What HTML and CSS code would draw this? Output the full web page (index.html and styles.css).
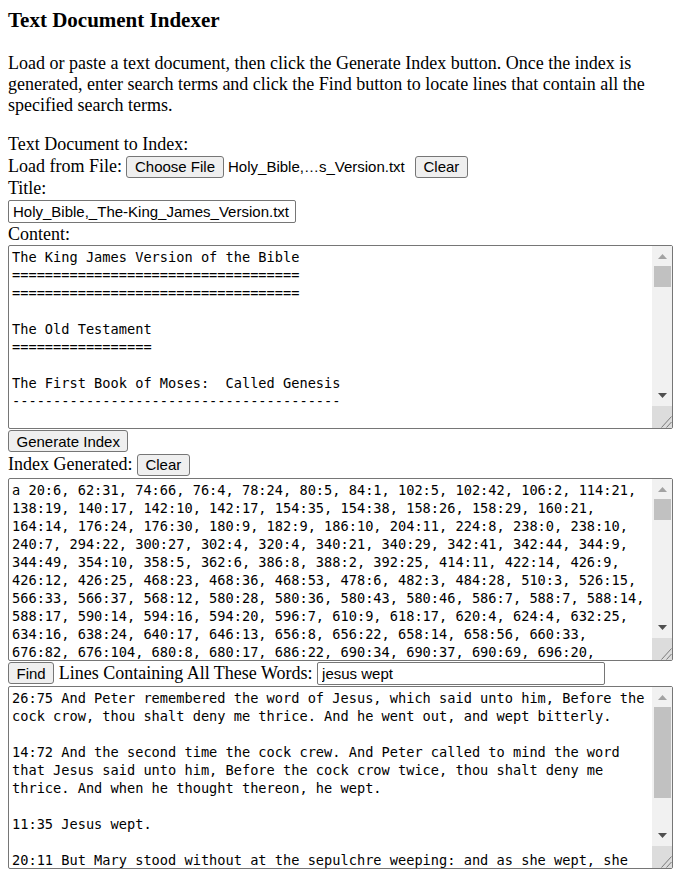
FILE: index.html
```html
<!DOCTYPE html>
<html lang="en">
<head>
<meta charset="utf-8">
<title>Text Document Indexer</title>
<link rel="stylesheet" href="styles.css">
</head>
<body>
<h1 class="page-title">Text Document Indexer</h1>
<p class="intro">Load or paste a text document, then click the Generate Index button. Once the index is generated, enter search terms and click the Find button to locate lines that contain all the specified search terms.</p>
<div class="label-line">Text Document to Index:</div>
<div class="row">
  <span>Load from File:</span>
  <span class="file-picker"><button class="btn" type="button">Choose File</button><span class="file-name">Holy_Bible,…s_Version.txt</span></span>
  <button class="btn" type="button">Clear</button>
</div>
<div class="label-line">Title:</div>
<input class="text-input title-input" type="text" value="Holy_Bible,_The-King_James_Version.txt">
<div class="label-line content-label">Content:</div>
<div class="area-wrap content-wrap">
<textarea class="area" spellcheck="false">The King James Version of the Bible
===================================
===================================

The Old Testament
=================

The First Book of Moses:  Called Genesis
----------------------------------------

1:1 In the beginning God created the heaven and the earth.

1:2 And the earth was without form, and void; and darkness was upon
the face of the deep. And the Spirit of God moved upon the face of the
waters.

1:3 And God said, Let there be light: and there was light.

1:4 And God saw the light, that it was good: and God divided the light
from the darkness.

1:5 And God called the light Day, and the darkness he called Night.
And the evening and the morning were the first day.</textarea>
<div class="sb" aria-hidden="true">
  <div class="sb-btn"><svg width="9" height="5" viewBox="0 0 9 5"><path d="M0 5L4.5 0L9 5Z" fill="#a3a3a3"/></svg></div>
  <div class="sb-track"><div class="sb-thumb"></div></div>
  <div class="sb-btn sb-btn-down"><svg width="9" height="5" viewBox="0 0 9 5"><path d="M0 0L9 0L4.5 5Z" fill="#505050"/></svg></div>
  <div class="sb-corner"><svg width="20" height="22" viewBox="0 0 20 22"><path d="M9.5 21.5L19.5 10.5M14.5 21.5L19.5 16" stroke="#7a7a7a" stroke-width="1" fill="none"/></svg></div>
</div>
</div>
<button class="btn block-btn" type="button">Generate Index</button>
<div class="row index-row">
  <span>Index Generated:</span>
  <button class="btn" type="button">Clear</button>
</div>
<div class="area-wrap index-wrap">
<textarea class="area" spellcheck="false">a 20:6, 62:31, 74:66, 76:4, 78:24, 80:5, 84:1, 102:5, 102:42, 106:2, 114:21,
138:19, 140:17, 142:10, 142:17, 154:35, 154:38, 158:26, 158:29, 160:21,
164:14, 176:24, 176:30, 180:9, 182:9, 186:10, 204:11, 224:8, 238:0, 238:10,
240:7, 294:22, 300:27, 302:4, 320:4, 340:21, 340:29, 342:41, 342:44, 344:9,
344:49, 354:10, 358:5, 362:6, 386:8, 388:2, 392:25, 414:11, 422:14, 426:9,
426:12, 426:25, 468:23, 468:36, 468:53, 478:6, 482:3, 484:28, 510:3, 526:15,
566:33, 566:37, 568:12, 580:28, 580:36, 580:43, 580:46, 586:7, 588:7, 588:14,
588:17, 590:14, 594:16, 594:20, 596:7, 610:9, 618:17, 620:4, 624:4, 632:25,
634:16, 638:24, 640:17, 646:13, 656:8, 656:22, 658:14, 658:56, 660:33,
676:82, 676:104, 680:8, 680:17, 686:22, 690:34, 690:37, 690:69, 696:20,
698:8, 702:15, 704:3, 706:27, 710:12, 712:40, 716:9, 720:31, 722:6, 726:18,
728:2, 730:44, 734:13, 736:7, 740:21, 742:35, 746:4, 748:19, 752:8, 754:26,
758:11, 760:3, 764:29, 766:14, 770:6, 772:38, 776:10, 778:22, 782:5, 784:17</textarea>
<div class="sb" aria-hidden="true">
  <div class="sb-btn"><svg width="9" height="5" viewBox="0 0 9 5"><path d="M0 5L4.5 0L9 5Z" fill="#a3a3a3"/></svg></div>
  <div class="sb-track"><div class="sb-thumb"></div></div>
  <div class="sb-btn sb-btn-down"><svg width="9" height="5" viewBox="0 0 9 5"><path d="M0 0L9 0L4.5 5Z" fill="#505050"/></svg></div>
  <div class="sb-corner"><svg width="20" height="22" viewBox="0 0 20 22"><path d="M9.5 21.5L19.5 10.5M14.5 21.5L19.5 16" stroke="#7a7a7a" stroke-width="1" fill="none"/></svg></div>
</div>
</div>
<div class="row find-row">
  <button class="btn" type="button">Find</button>
  <span>Lines Containing All These Words:</span>
  <input class="text-input" type="text" value="jesus wept">
</div>
<div class="area-wrap results-wrap">
<textarea class="area" spellcheck="false">26:75 And Peter remembered the word of Jesus, which said unto him, Before the
cock crow, thou shalt deny me thrice. And he went out, and wept bitterly.

14:72 And the second time the cock crew. And Peter called to mind the word
that Jesus said unto him, Before the cock crow twice, thou shalt deny me
thrice. And when he thought thereon, he wept.

11:35 Jesus wept.

20:11 But Mary stood without at the sepulchre weeping: and as she wept, she
stooped down, and looked into the sepulchre,</textarea>
<div class="sb" aria-hidden="true">
  <div class="sb-btn"><svg width="9" height="5" viewBox="0 0 9 5"><path d="M0 5L4.5 0L9 5Z" fill="#a3a3a3"/></svg></div>
  <div class="sb-track"><div class="sb-thumb sb-thumb-large"></div></div>
  <div class="sb-btn sb-btn-down"><svg width="9" height="5" viewBox="0 0 9 5"><path d="M0 0L9 0L4.5 5Z" fill="#505050"/></svg></div>
  <div class="sb-corner"><svg width="20" height="22" viewBox="0 0 20 22"><path d="M9.5 21.5L19.5 10.5M14.5 21.5L19.5 16" stroke="#7a7a7a" stroke-width="1" fill="none"/></svg></div>
</div>
</div>
</body>
</html>
```

FILE: styles.css
```css
html {
  background: #ffffff;
}

body {
  margin: 8px;
  font-family: "Liberation Serif", "Times New Roman", serif;
  font-size: 18px;
  line-height: 21px;
  color: #000000;
}

.page-title {
  margin: 0 0 21px;
  font-size: 21px;
  line-height: 24px;
  font-weight: bold;
}

.intro {
  margin: 0 0 18px;
}

.label-line {
  height: 21px;
}

.content-label {
  margin-top: 1px;
}

.row {
  display: flex;
  align-items: center;
  gap: 4.5px;
  height: 23px;
  white-space: nowrap;
}

.index-row {
  height: 25px;
}

.find-row {
  height: 24px;
}

.btn {
  box-sizing: border-box;
  height: 22px;
  margin: 0;
  padding: 1px 7.5px;
  font-family: "Liberation Sans", Arial, sans-serif;
  font-size: 15px;
  line-height: 17px;
  color: #000000;
  background: #efefef;
  border: 1px solid #767676;
  border-radius: 3px;
}

.block-btn {
  display: block;
  margin-top: 1px;
}

.file-picker {
  display: flex;
  align-items: center;
  width: 284px;
}

.file-name {
  margin-left: 4.5px;
  font-family: "Liberation Sans", Arial, sans-serif;
  font-size: 15px;
  line-height: 17px;
}

.text-input {
  box-sizing: border-box;
  width: 288px;
  height: 23px;
  margin: 0;
  padding: 1px 4px;
  font-family: "Liberation Sans", Arial, sans-serif;
  font-size: 15px;
  color: #000000;
  background: #ffffff;
  border: 1px solid #767676;
  border-radius: 2px;
}

.title-input {
  display: block;
  margin-top: 1px;
}

/* textarea with a drawn scrollbar on top of it */
.area-wrap {
  position: relative;
  width: 665px;
  height: 183px;
}

.content-wrap {
  height: 184px;
}

.index-wrap,
.results-wrap {
  margin-top: 1px;
}

.area {
  display: block;
  box-sizing: border-box;
  width: 100%;
  height: 100%;
  margin: 0;
  padding: 2px 23px 2px 3px;
  font-family: "DejaVu Sans Mono", "Liberation Mono", monospace;
  font-size: 13.65px;
  line-height: 18px;
  color: #000000;
  background: #ffffff;
  border: 1px solid #767676;
  border-radius: 2px;
  overflow: hidden;
  resize: none;
}

.sb {
  position: absolute;
  top: 1px;
  right: 1px;
  bottom: 1px;
  width: 20px;
  display: flex;
  flex-direction: column;
  background: #f1f1f1;
}

.sb-btn {
  height: 20px;
  flex: none;
  display: flex;
  align-items: center;
  justify-content: center;
  padding-top: 1px;
  box-sizing: border-box;
}

.sb-btn-down {
  padding-top: 0;
  padding-bottom: 1px;
}

.sb-btn svg {
  display: block;
  margin-left: 1px;
}

.sb-track {
  flex: 1;
}

.sb-thumb {
  height: 21px;
  margin: 0 1px 0 2px;
  background: #c1c1c1;
}

.sb-thumb-large {
  height: 91px;
}

.sb-corner {
  height: 22px;
  flex: none;
  background: #dcdcdc;
}

.sb-corner svg {
  display: block;
}
```
